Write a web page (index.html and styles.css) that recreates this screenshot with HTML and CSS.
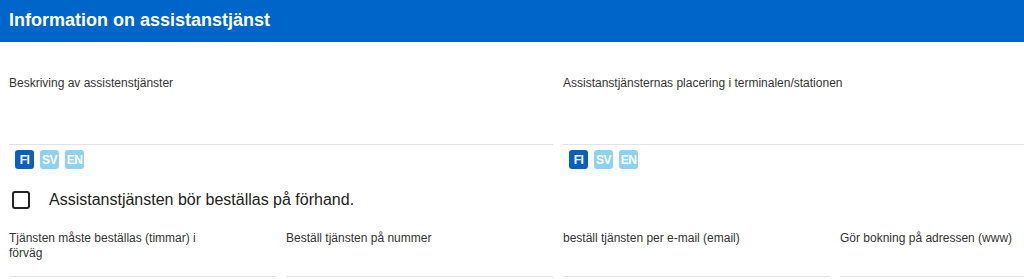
FILE: index.html
```html
<!DOCTYPE html>
<html lang="sv">
<head>
<meta charset="utf-8">
<title>Information on assistanstjänst</title>
<link rel="stylesheet" href="styles.css">
</head>
<body>
<header class="bar">
  <h1 class="title">Information on assistanstjänst</h1>
</header>
<main class="content">
  <section class="row row-2">
    <div class="field">
      <label class="label">Beskriving av assistenstjänster</label>
      <div class="input input-tall"></div>
      <div class="langs">
        <span class="lang active">FI</span>
        <span class="lang">SV</span>
        <span class="lang">EN</span>
      </div>
    </div>
    <div class="field">
      <label class="label">Assistanstjänsternas placering i terminalen/stationen</label>
      <div class="input input-tall"></div>
      <div class="langs">
        <span class="lang active">FI</span>
        <span class="lang">SV</span>
        <span class="lang">EN</span>
      </div>
    </div>
  </section>
  <div class="check-row">
    <span class="checkbox"></span>
    <span class="check-text">Assistanstjänsten bör beställas på förhand.</span>
  </div>
  <section class="row row-4">
    <div class="field">
      <label class="label label-fixed">Tjänsten måste beställas (timmar) i förväg</label>
      <div class="input input-short"></div>
    </div>
    <div class="field">
      <label class="label label-fixed">Beställ tjänsten på nummer</label>
      <div class="input input-short"></div>
    </div>
    <div class="field">
      <label class="label label-fixed">beställ tjänsten per e-mail (email)</label>
      <div class="input input-short"></div>
    </div>
    <div class="field">
      <label class="label label-fixed">Gör bokning på adressen (www)</label>
      <div class="input input-short"></div>
    </div>
  </section>
</main>
</body>
</html>
```
FILE: styles.css
```css
html, body {
  margin: 0;
  padding: 0;
  overflow: hidden;
  background: #ffffff;
}
body {
  font-family: "Liberation Sans", Arial, sans-serif;
  color: #333333;
  width: 1024px;
}
.bar {
  background: #0065c9;
  height: 42px;
  display: flex;
  align-items: center;
  padding: 0 9px;
  width: 1200px;
}
.title {
  margin: 0;
  color: #ffffff;
  font-size: 18px;
  font-weight: bold;
  line-height: 22px;
  margin-top: -3px;
}
.content {
  padding: 0 9px;
  width: 1098px;
}
.row {
  display: grid;
  column-gap: 10px;
}
.row-2 {
  grid-template-columns: 544px 544px;
  padding-top: 34px;
}
.row-4 {
  grid-template-columns: repeat(4, 267px);
  padding-top: 22px;
}
.field {
  display: flex;
  flex-direction: column;
}
.label {
  font-size: 12px;
  line-height: 15px;
  color: #333333;
  max-width: 75%;
}
.label-fixed {
  min-height: 30px;
}
.input {
  border-bottom: 1px solid #e3e3e3;
}
.input-tall {
  height: 53px;
}
.input-short {
  height: 15px;
}
.langs {
  display: flex;
  gap: 6px;
  padding: 5px 0 0 6px;
}
.lang {
  flex: none;
  width: 19px;
  height: 19px;
  border-radius: 3px;
  background: #8dd2ee;
  color: #ffffff;
  font-size: 12px;
  font-weight: bold;
  display: flex;
  align-items: center;
  justify-content: center;
  letter-spacing: -0.5px;
}
.lang.active {
  background: #0b5fbd;
}
.check-row {
  display: flex;
  align-items: center;
  gap: 19px;
  padding: 22px 0 0 3px;
  height: 18px;
}
.checkbox {
  box-sizing: border-box;
  width: 18px;
  height: 18px;
  border: 2px solid #222222;
  border-radius: 3px;
  flex: none;
}
.check-text {
  font-size: 16px;
  line-height: 18px;
  color: #222222;
}
```
